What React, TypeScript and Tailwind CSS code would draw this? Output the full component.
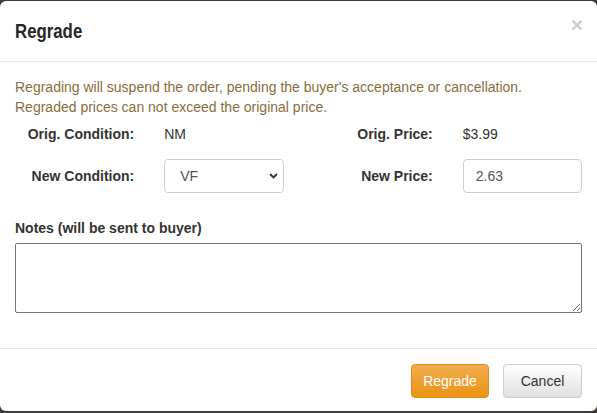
import React, { useState } from 'react';

const Label = ({ children }: { children: React.ReactNode }) => (
    <div className="px-[15px] text-right text-[14px] font-bold text-[#333]">{children}</div>
);

const App: React.FC = () => {
    const [condition, setCondition] = useState<string>('VF');
    const [price, setPrice] = useState<string>('2.63');
    const [notes, setNotes] = useState<string>('');

    return (
        <div className="w-[597px] h-[413px] overflow-hidden bg-[#3e3a38] pt-[1px] font-['Liberation_Sans',Arial,sans-serif] text-[14px] text-[#333]">
            <div className="flex h-[410px] flex-col rounded-[6px] bg-white">
                {/* header */}
                <div className="flex h-[61px] items-center justify-between border-b border-[#e5e5e5] pl-[15px] pr-[14px]">
                    <h4 className="origin-left scale-x-[0.8] font-['Liberation_Sans',Arial,sans-serif] text-[21px] font-bold leading-[26px] text-[#262626]">
                        Regrade
                    </h4>
                    <button className="-mt-[14px] text-[21px] font-bold leading-none text-[#cfcfcf]">×</button>
                </div>

                {/* body */}
                <div className="flex-1 px-[15px] pt-[15px]">
                    <p className="leading-[20px] text-[#8a6d3b]">
                        Regrading will suspend the order, pending the buyer's acceptance or cancellation.
                        <br />
                        Regraded prices can not exceed the original price.
                    </p>

                    <div className="-mx-[15px] grid h-[34px] grid-cols-4 items-center">
                        <Label>Orig. Condition:</Label>
                        <div className="px-[15px]">NM</div>
                        <Label>Orig. Price:</Label>
                        <div className="px-[15px]">$3.99</div>
                    </div>

                    <div className="-mx-[15px] mt-[8px] grid h-[34px] grid-cols-4 items-center">
                        <Label>New Condition:</Label>
                        <div className="px-[15px]">
                            <div className="relative">
                                <select
                                    value={condition}
                                    onChange={(e) => setCondition(e.target.value)}
                                    className="h-[34px] w-full appearance-none rounded-[4px] border border-[#ccc] bg-white pl-[15px] pr-[12px] text-[14px] text-[#555] outline-none"
                                >
                                    {['NM', 'VF', 'FN', 'VG', 'G', 'PR'].map((c) => (
                                        <option key={c} value={c}>{c}</option>
                                    ))}
                                </select>
                                <svg className="pointer-events-none absolute right-[6px] top-[14px]" width="9" height="6" viewBox="0 0 9 6">
                                    <path d="M1 1l3.5 3.5L8 1" fill="none" stroke="#333" strokeWidth="1.8" />
                                </svg>
                            </div>
                        </div>
                        <Label>New Price:</Label>
                        <div className="px-[15px]">
                            <input
                                value={price}
                                onChange={(e) => setPrice(e.target.value)}
                                className="h-[34px] w-full rounded-[4px] border border-[#ccc] px-[12px] text-[14px] text-[#555] outline-none"
                            />
                        </div>
                    </div>

                    <div className="mt-[25px] mb-[5px] font-bold leading-[20px]">Notes (will be sent to buyer)</div>
                    <textarea
                        value={notes}
                        onChange={(e) => setNotes(e.target.value)}
                        className="block h-[70px] w-full rounded-[2px] border border-[#767676] outline-none"
                    />
                </div>

                {/* footer */}
                <div className="flex h-[63px] items-start justify-end gap-[14px] border-t border-[#e5e5e5] px-[15px] pt-[15px]">
                    <button className="h-[34px] w-[78px] rounded-[4px] border border-[#e38d13] bg-[linear-gradient(to_bottom,#f0ad4e,#eb9316)] text-[14px] text-white">
                        Regrade
                    </button>
                    <button className="h-[34px] w-[79px] rounded-[4px] border border-[#ccc] bg-[linear-gradient(to_bottom,#fff,#e0e0e0)] text-[14px] text-[#333]">
                        Cancel
                    </button>
                </div>
            </div>
        </div>
    );
};

export default App;
